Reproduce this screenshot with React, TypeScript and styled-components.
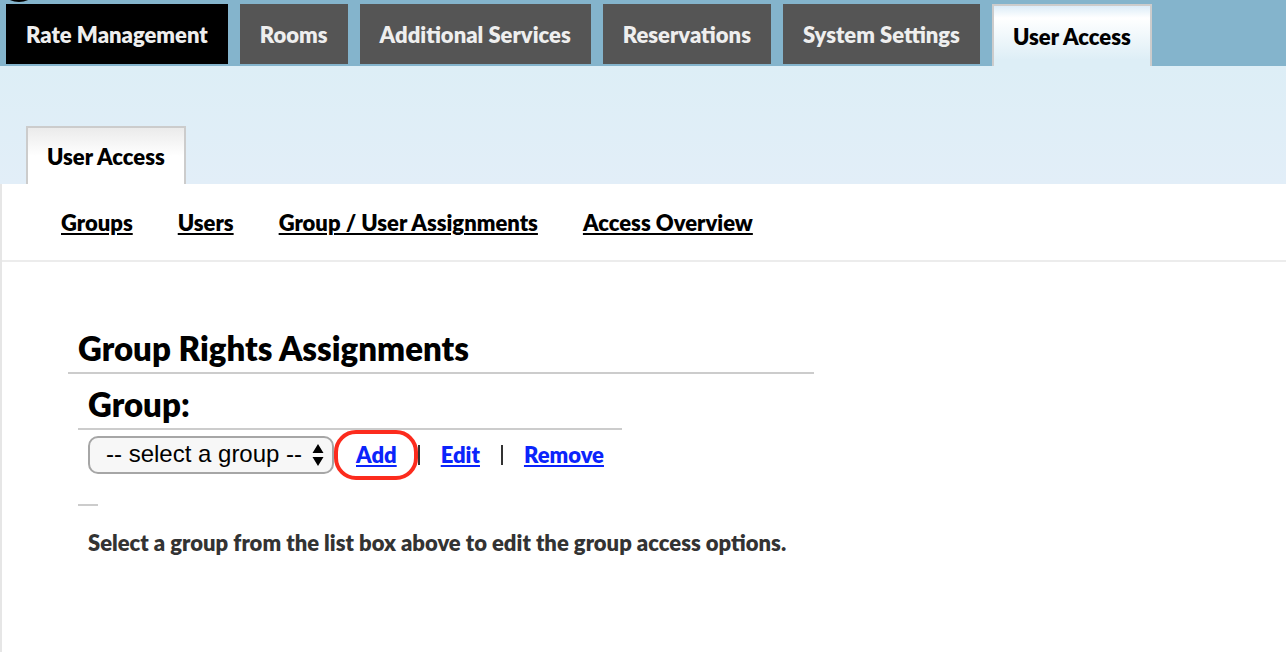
import {FC, ReactNode, useState} from "react";
import styled, {createGlobalStyle} from "styled-components";

const GlobalStyle = createGlobalStyle`
  * {
    box-sizing: border-box;
  }

  body {
    margin: 0;
    background: #fff;
    color: #000;
    font-family: Lato, "Open Sans", sans-serif;
    font-size: 22px;
    font-weight: 800;
    line-height: 28px;
  }
`

const Page = styled.div`
  display: flex;
  flex-direction: column;
  min-height: 100vh;
`

const MainNav = styled.nav`
  position: relative;
  display: flex;
  align-items: flex-start;
  gap: 12px;
  height: 66px;
  padding: 4px 6px 0;
  background: #84b4cc;
`

const LogoEdge = styled.svg`
  position: absolute;
  top: 0;
  left: 9px;
`

const MainTab = styled.a<{ $isDark?: boolean }>`
  padding: 17px 20px 15px;
  background: ${p => p.$isDark ? "#000" : "#555"};
  color: #eee;
  text-decoration: none;
  white-space: nowrap;
`

const ActiveMainTab = styled(MainTab)`
  height: 62px;
  padding: 17px 19px 0;
  border: 2px solid #ccc;
  border-bottom: 0;
  background: linear-gradient(#dcecf8, #fff 20%, #ddeef6 90%);
  color: #000;
`

const SubNav = styled.nav`
  display: flex;
  align-items: flex-end;
  height: 118px;
  padding: 0 26px;
  background: linear-gradient(#ddeef6, #e2eef8);
`

const SubTab = styled.a`
  height: 58px;
  padding: 15px 19px 0;
  border: 2px solid #ccc;
  border-bottom: 0;
  background: linear-gradient(#ebebeb, #fff 50%);
  color: #000;
  text-decoration: none;
`

const Panel = styled.div`
  flex: 1;
  border-left: 2px solid #e6e6e6;
`

const LinkBar = styled.nav`
  display: flex;
  gap: 45px;
  height: 78px;
  padding: 25px 59px;
  border-bottom: 2px solid #ececec;
`

const TextLink = styled.a<{ $isAction?: boolean }>`
  color: ${p => p.$isAction ? "#0b24fb" : "#000"};
  text-decoration: underline;
  text-decoration-thickness: 2px;
  text-underline-offset: 2px;
`

const Content = styled.main`
  max-width: 812px;
  padding: 64px 0 0 66px;
`

const Title = styled.h1`
  margin: 0;
  padding: 1px 10px 3px;
  border-bottom: 2px solid #ccc;
  font-size: 33px;
  font-weight: 800;
  line-height: 42px;
`

const GroupBox = styled.section`
  max-width: 554px;
  padding: 8px 0 0 10px;
`

const GroupTitle = styled(Title).attrs({as: "h2"})``

const GroupRow = styled.div`
  display: flex;
  align-items: center;
  padding: 6px 10px 0;
`

const SelectWrap = styled.div`
  position: relative;
`

const Select = styled.select`
  display: block;
  width: 246px;
  height: 38px;
  padding: 0 30px 3px 16px;
  appearance: none;
  background: #f7f7f7;
  border: 2px solid #a6a6a6;
  border-radius: 10px;
  color: #000;
  font-family: "Liberation Sans", sans-serif;
  font-size: 24px;
`

const SelectArrows = styled.svg`
  position: absolute;
  top: 8px;
  right: 10px;
  pointer-events: none;
`

const Actions = styled.div`
  display: flex;
  align-items: center;
  gap: 21px;
  padding-left: 22px;
`

const Separator = styled.span`
  width: 2px;
  height: 20px;
  background: #333;
`

const Ringed = styled.span`
  position: relative;

  &::after {
    content: "";
    position: absolute;
    inset: -11px -21px -11px -22px;
    border: 4px solid #fc2b1d;
    border-radius: 22px;
    pointer-events: none;
  }
`

const ShortRule = styled.hr`
  width: 20px;
  height: 2px;
  margin: 30px 0 0;
  border: 0;
  background: #ccc;
`

const Hint = styled.p`
  margin: 0;
  padding: 23px 0 22px 20px;
  color: #333;
`

const mainTabs = ["Rate Management", "Rooms", "Additional Services", "Reservations", "System Settings"];
const links = ["Groups", "Users", "Group / User Assignments", "Access Overview"];

type ActionLinkProps = {
    children: ReactNode;
}

const ActionLink: FC<ActionLinkProps> = ({children}) => (
    <TextLink href="#" $isAction>{children}</TextLink>
);

const App: FC = () => {
    const [group, setGroup] = useState("");

    return (
        <Page>
            <GlobalStyle/>
            <MainNav>
                <LogoEdge width="21" height="2" aria-hidden="true">
                    <ellipse cx="10" cy="-4" rx="12" ry="6"/>
                </LogoEdge>
                {mainTabs.map((tab, i) => (
                    <MainTab key={tab} href="#" $isDark={i === 0}>{tab}</MainTab>
                ))}
                <ActiveMainTab href="#">User Access</ActiveMainTab>
            </MainNav>
            <SubNav>
                <SubTab href="#">User Access</SubTab>
            </SubNav>
            <Panel>
                <LinkBar>
                    {links.map(link => <TextLink key={link} href="#">{link}</TextLink>)}
                </LinkBar>
                <Content>
                    <Title>Group Rights Assignments</Title>
                    <GroupBox>
                        <GroupTitle><label htmlFor="group">Group:</label></GroupTitle>
                        <GroupRow>
                            <SelectWrap>
                                <Select id="group" value={group} onChange={e => setGroup(e.target.value)}>
                                    <option value="">-- select a group --</option>
                                </Select>
                                <SelectArrows width="12" height="22" aria-hidden="true">
                                    <path d="M6 0 L11.5 9 H0.5 Z M0.5 13 H11.5 L6 22 Z"/>
                                </SelectArrows>
                            </SelectWrap>
                            <Actions>
                                <Ringed><ActionLink>Add</ActionLink></Ringed>
                                <Separator/>
                                <ActionLink>Edit</ActionLink>
                                <Separator/>
                                <ActionLink>Remove</ActionLink>
                            </Actions>
                        </GroupRow>
                        <ShortRule/>
                    </GroupBox>
                    <Hint>Select a group from the list box above to edit the group access options.</Hint>
                </Content>
            </Panel>
        </Page>
    );
};

export default App;
